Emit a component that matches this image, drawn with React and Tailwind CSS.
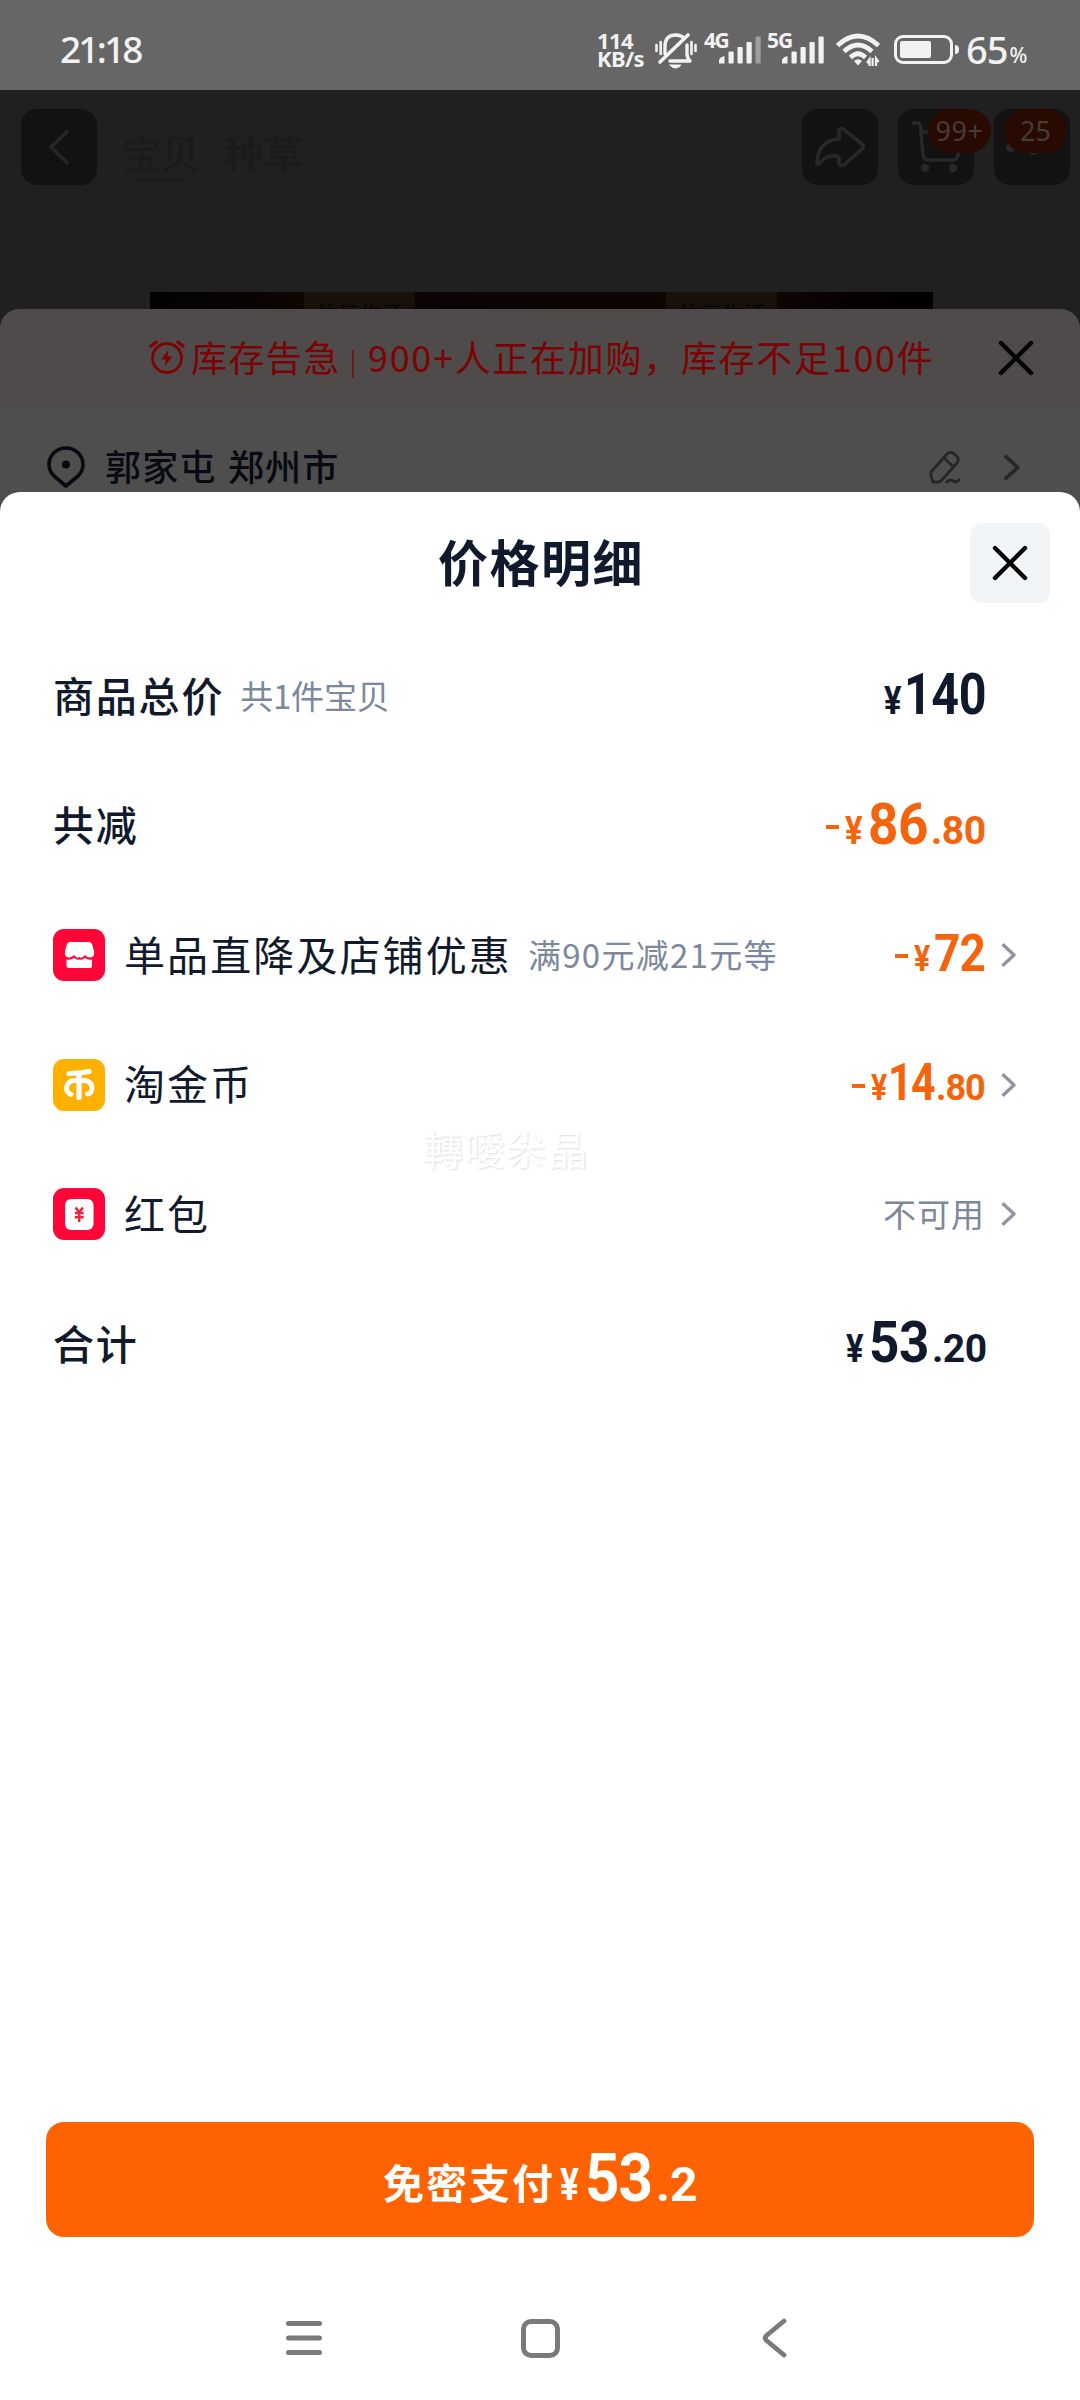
const CJK = "font-['Noto_Sans_CJK_SC',sans-serif]";

function Chevron({ className }) {
  return (
    <svg viewBox="0 0 18 28" className={className} fill="none" stroke="currentColor" strokeWidth="3.6" strokeLinecap="butt" strokeLinejoin="round">
      <path d="M2.5 2.5 L15 14 L2.5 25.5" />
    </svg>
  );
}

function CloseIcon() {
  return (
    <svg viewBox="0 0 36 36" className="h-9 w-9" fill="none" stroke="#000" strokeWidth="4.4" strokeLinecap="round">
      <path d="M3 3 L33 33 M33 3 L3 33" />
    </svg>
  );
}

function Bars({ weak }) {
  return (
    <svg viewBox="0 0 44 30" className="h-[30px] w-[44px]" fill="#f2f2f2">
      <path d="M1 28.5 V25 Q2 22 6.500 21 V28.500 Z" />
      <rect x="10.500" y="16.500" width="5.200" height="12" rx="1" />
      <rect x="19.500" y="12" width="5.200" height="16.500" rx="1" />
      <rect x="28.500" y="7" width="5.200" height="21.500" rx="1" />
      <rect x="37.500" y="1.500" width="5.200" height="27" rx="1" opacity={weak ? 0.4 : 1} />
    </svg>
  );
}

function StatusBar() {
  return (
    <div className="flex h-[90px] items-start bg-[#666] text-[#f2f2f2]">
      <div className="mt-[25px] ml-[60px] w-[537px] font-['Noto_Sans',sans-serif] text-[37px] leading-[48px] font-medium tracking-[-2.8px]">21:18</div>
      <div className="mt-[31px] w-[50px] font-['Noto_Sans',sans-serif] text-[22px] leading-[18px] font-bold tracking-[-0.6px]">
        <div>114</div>
        <div>KB/s</div>
      </div>
      <svg viewBox="0 0 44 38" className="mt-[32px] ml-[7px] h-[38px] w-[44px]" fill="none" stroke="#f2f2f2" strokeWidth="3.400" strokeLinecap="round">
        <path d="M11 22 V14 Q11 3 22 3 Q27 3 30 6" />
        <path d="M33 13 V22 Q33 26 36 29 H16" strokeLinejoin="round" />
        <path d="M6 30 L34 3" strokeWidth="3.600" />
        <path d="M2.500 13 V19 M6.700 10 V22 M37.500 10 V22 M41.500 13 V19" strokeWidth="2.600" />
        <path d="M16 33 H27 Q25 36 21.500 36 Q18 36 16 33 Z" fill="#f2f2f2" strokeWidth="1" />
      </svg>
      <div className="mt-[30px] ml-[6px] w-[14px] font-['Noto_Sans',sans-serif] text-[21px] leading-[20px] font-bold tracking-[-1.5px] whitespace-nowrap">4G</div>
      <div className="mt-[35px]"><Bars weak /></div>
      <div className="mt-[30px] ml-[5px] w-[14px] font-['Noto_Sans',sans-serif] text-[21px] leading-[20px] font-bold tracking-[-1px] whitespace-nowrap">5G</div>
      <div className="mt-[35px]"><Bars /></div>
      <svg viewBox="0 0 44 34" className="mt-[33px] ml-[11px] h-[34px] w-[44px]" fill="none" stroke="#f2f2f2" strokeWidth="4.600" strokeLinecap="butt">
        <path d="M1.500 12.500 Q22 -6.500 42.500 12.500" />
        <path d="M8 18.500 Q22 5.500 36 18.500" />
        <path d="M14.500 24.500 Q22 17 29.500 24.500" />
        <path d="M18 28 Q22 24.500 26 28 L22 32.500 Z" fill="#f2f2f2" stroke="none" />
        <path d="M33.500 33 V26.500 L31 30 M36.600 25 V33 M40 33 V25.500 L42.500 29" strokeWidth="2.200" />
      </svg>
      <div className="mt-[35px] ml-[14px] flex h-[29px] w-[59px] rounded-[9px] border-[3px] border-[#f2f2f2] p-[3px]">
        <div className="h-[17px] w-[31px] rounded-[2px] bg-[#f2f2f2]" />
      </div>
      <div className="mt-[45px] ml-[2px] h-[9px] w-[4px] rounded-r bg-[#f2f2f2]" />
      <div className="mt-[25px] ml-[7px] font-['Noto_Sans',sans-serif] text-[38px] leading-[48px] font-medium tracking-[-1px]">65</div>
      <div className="mt-[38px] ml-[2px] font-['Noto_Sans',sans-serif] text-[21px] leading-[35px] font-medium">%</div>
    </div>
  );
}

function DimButton({ children, className }) {
  return <div className={`relative flex h-[76px] w-[76px] items-center justify-center rounded-[16px] bg-[#121212] ${className}`}>{children}</div>;
}

function DimHeader() {
  return (
    <div className="flex h-[202px] items-start bg-[#202020] pt-[19px]">
      <DimButton className="ml-[21px]">
        <svg viewBox="0 0 22 36" className="h-9 w-[22px]" fill="none" stroke="#262626" strokeWidth="3.600" strokeLinecap="round" strokeLinejoin="round">
          <path d="M19 2.500 L3 18 L19 33.500" />
        </svg>
      </DimButton>
      <div className={`${CJK} mt-[14px] ml-[25px] w-[680px] text-[39px] leading-[56px] font-medium text-[#1b1b1b]`}>
        宝贝<span className="ml-[24px] tracking-[1px]">种草</span>
        <div className="ml-[14px] h-[3px] w-[48px] rounded bg-[#1c1c1c]" />
      </div>
      <DimButton>
        <svg viewBox="0 0 50 42" className="h-[42px] w-[50px]" fill="none" stroke="#282828" strokeWidth="3.600" strokeLinejoin="round">
          <path d="M24 6 Q24 1 28 3 L47 18 Q50 21 47 23 L30 38 Q25 42 24 37 V31 Q12 27 5 37 Q2 41 2 36 Q3 15 24 13 Z" />
        </svg>
      </DimButton>
      <DimButton className="ml-[20px]">
        <svg viewBox="0 0 50 54" className="h-[54px] w-[50px]" fill="none" stroke="#282828" strokeWidth="3.400" strokeLinecap="round" strokeLinejoin="round">
          <path d="M2 3 H7 Q9 3 9.500 7 L12 35 Q13 40 17 40 H42 Q46 40 47 35 L50 20 M10 12 H28" />
          <circle cx="14" cy="48" r="2.500" fill="#282828" />
          <circle cx="42" cy="48" r="2.500" fill="#282828" />
        </svg>
        <div className="absolute top-0 left-[30px] z-10 flex h-[44px] w-[63px] items-center justify-center rounded-full bg-[#290a00] font-['Noto_Sans',sans-serif] text-[27px] tracking-[0.5px] text-[#443c38]">99+</div>
      </DimButton>
      <DimButton className="ml-[20px]">
        <div className="absolute top-[34px] left-[12px] h-[9px] w-[9px] rounded-full bg-[#282828]" />
        <div className="absolute top-[36px] left-[34px] h-[10px] w-[10px] rounded-full bg-[#282828]" />
        <div className="absolute top-0 left-[10px] flex h-[44px] w-[63px] items-center justify-center rounded-full bg-[#290a00] font-['Noto_Sans',sans-serif] text-[27px] text-[#443c38]">25</div>
      </DimButton>
    </div>
  );
}

function ProductStrip() {
  return (
    <div className={`${CJK} flex h-[33px] items-start bg-[#202020]`}>
      <div className="ml-[150px] h-[33px] w-[154px] bg-gradient-to-r from-[#030202] to-[#0d0603]" />
      <div className="h-[33px] w-[111px] bg-[#17110a] pt-[8px] pl-[12px] text-[22px] leading-[25px] text-[#060402]">依云生活</div>
      <div className="h-[33px] w-[251px] bg-gradient-to-r from-[#0a0504] to-[#0c0504]" />
      <div className="h-[33px] w-[111px] bg-[#17110a] pt-[8px] pl-[12px] text-[22px] leading-[25px] text-[#060402]">依云生活</div>
      <div className="h-[33px] w-[156px] bg-gradient-to-r from-[#0d0605] to-[#020000]" />
    </div>
  );
}

function StockNotice() {
  return (
    <div className="relative mt-[-16px] h-[199px] overflow-hidden rounded-t-[20px] bg-[#4e4e4e]">
      <div className={`${CJK} flex h-[97px] items-center bg-[#4e4b4a] text-[36px] leading-[52px] text-[#7c0304]`}>
        <svg viewBox="0 0 36 36" className="ml-[149px] h-9 w-9" fill="none" stroke="#7c0304" strokeWidth="2.800" strokeLinecap="round">
          <circle cx="18" cy="18" r="14.500" />
          <path d="M2 6 L7 2 M29 2 L34 6" strokeWidth="3.400" />
          <path d="M19.500 9.500 L12 19.500 H17 L15.500 26.500 L23.500 16.500 H18.500 Z" fill="#7c0304" stroke="none" />
        </svg>
        <div className="mt-[-3px] ml-[6px] w-[148px] tracking-[1.4px] whitespace-nowrap">库存告急</div>
        <div className="mt-[12px] ml-[13px] h-[28px] w-[2px] bg-[#651c1c]" />
        <div className="mt-[-3px] ml-[14px] w-[570px] tracking-[1.7px] whitespace-nowrap">900+人正在加购，库存不足100件</div>
        <div className="ml-[60px]"><CloseIcon /></div>
      </div>
      <div className={`${CJK} flex h-[118px] items-center text-[36px] leading-[52px] font-medium text-[#080a12]`}>
        <svg viewBox="0 0 38 42" className="mt-[4px] ml-[47px] h-[42px] w-[38px]" fill="none" stroke="#080a12" strokeWidth="3.600" strokeLinejoin="round">
          <path d="M19 40 L7 30 Q2 25 2 18.500 A17 16.500 0 0 1 36 18.500 Q36 25 31 30 Z" />
          <circle cx="19" cy="18.500" r="4" fill="#080a12" stroke="none" />
        </svg>
        <div className="ml-[20px] w-[824px] tracking-[1.2px] [word-spacing:2px]">郭家屯 郑州市</div>
        <svg viewBox="0 0 32 34" className="mt-[4px] h-[34px] w-[32px]" fill="none" stroke="#24262a" strokeWidth="2.800" strokeLinecap="round" strokeLinejoin="round">
          <path d="M2 22 L18 4 Q21 1 24.500 3.500 L27 5.500 Q31 9 28 13 L12 31 Q11 32 9.500 32 H4 L2 26 Z M15 8 L24 16.500" />
          <path d="M18 32 Q21 28.500 24 31 Q27 33 30 30" />
        </svg>
        <Chevron className="mt-[4px] ml-[41px] h-[29px] w-[19px] text-[#24262a]" />
      </div>
    </div>
  );
}

/* Amounts use condensed figures: each part sits in a cell sized for its digits. */
function Price({ minus, whole, cents, big, yenCell, wholeCell, wholeFit, centsCell, color }) {
  return (
    <div className={`mt-[-2px] flex items-baseline font-['Roboto',sans-serif] font-bold whitespace-nowrap ${color}`}>
      {minus && <span className={big ? "mt-[6px] mr-[6px] h-[4px] w-[13px] self-center bg-current" : "mt-[4px] mr-[6px] h-[4px] w-[13px] self-center bg-current"} />}
      <span className={yenCell}>
        <span className={big ? "inline-block origin-left scale-x-[0.84] text-[39px]" : "inline-block origin-left scale-x-[0.84] text-[36px]"}>¥</span>
      </span>
      <span className={`${wholeCell} ${big ? "text-[57px]" : "text-[51px]"}`}>
        <span className={`inline-block origin-left ${wholeFit}`}>{whole}</span>
      </span>
      {cents && <span className={`${centsCell} ${big ? "text-[39px] tracking-[-0.5px]" : "text-[36px] tracking-[-1px]"}`}>.{cents}</span>}
    </div>
  );
}

function ShopIcon() {
  return (
    <svg viewBox="0 0 52 52" className="h-[52px] w-[52px]">
      <rect width="52" height="52" rx="11" fill="#ff0538" />
      <path d="M17 13 H36 Q38 13 39 15 L41 22 Q42 28 37 28.500 Q34 28.500 32 26 Q29 30 26.500 28 Q24 30 21 26 Q19 28.500 16 28.500 Q11 28 12 22 L14 15 Q15 13 17 13 Z" fill="#fff" />
      <path d="M13.500 30.500 Q18 31.500 21 29 Q24 31.500 26.500 30.500 Q29 31.500 32 29 Q35 31.500 39 30.500 V37 Q39 39 37 39 H16 Q13.500 39 13.500 37 Z" fill="#fff" />
    </svg>
  );
}

function CoinIcon() {
  return (
    <svg viewBox="0 0 52 52" className="h-[52px] w-[52px]">
      <rect width="52" height="52" rx="11" fill="#ffb000" />
      <g fill="none" stroke="#fff" strokeWidth="5.200" strokeLinecap="round">
        <path d="M16 14.500 Q27 14.500 36 12.500 M26 14 V38.500" />
        <path d="M18 35.500 Q13 33 13.500 28.500 Q15 21.500 22 21.500 H30 Q38 21.500 39 28 Q39 35 34.500 35" strokeWidth="4.800" />
      </g>
    </svg>
  );
}

function PacketIcon() {
  return (
    <svg viewBox="0 0 52 52" className="h-[52px] w-[52px]">
      <rect width="52" height="52" rx="11" fill="#ff0538" />
      <rect x="12" y="11" width="28.500" height="31" rx="6" fill="#fff" />
      <path d="M22.500 19.500 L26.200 24 L30 19.500 M26.200 24 V34 M21.800 25 H30.600 M21.800 29.300 H30.600" fill="none" stroke="#e8243f" strokeWidth="2.500" />
    </svg>
  );
}

function Row({ icon, label, note, noteClass, children, chevron, strong }) {
  return (
    <div className="flex h-[129.6px] items-center">
      {icon && <div className="mr-[19px]">{icon}</div>}
      <div className={strong ? "mt-[-3px] text-[41px] font-medium tracking-[1.8px]" : "mt-[-3px] text-[41px] tracking-[2.1px]"}>{label}</div>
      {note && <div className={`text-[33px] text-[#7c889c] ${noteClass}`}>{note}</div>}
      <div className="ml-auto">{children}</div>
      <div className="flex w-[32px] justify-end">{chevron && <Chevron className="h-[26px] w-[17px] text-[#90959f]" />}</div>
    </div>
  );
}

function NavBar() {
  return (
    <div className="flex h-[124px] items-center">
      <svg viewBox="0 0 38 36" className="ml-[285px] h-9 w-[38px]" fill="none" stroke="#7a7a7a" strokeWidth="5" strokeLinecap="round">
        <path d="M3.500 3.500 H34.500 M3.500 18 H34.500 M3.500 32.500 H34.500" />
      </svg>
      <div className="ml-[198px] h-[39px] w-[39px] rounded-[10px] border-[5px] border-[#7a7a7a]" />
      <svg viewBox="0 0 26 40" className="ml-[202px] h-[40px] w-[26px]" fill="none" stroke="#7a7a7a" strokeWidth="4.800" strokeLinecap="round" strokeLinejoin="round">
        <path d="M22 3 L4.500 17.500 Q2 20 4.500 22.500 L22 37" />
      </svg>
    </div>
  );
}

export default function App() {
  const dark = "text-[#111a2c]";
  const orange = "text-[#f5640c]";
  return (
    <div className="h-[2400px] w-[1080px] overflow-hidden bg-[#202020]">
      <StatusBar />
      <DimHeader />
      <ProductStrip />
      <StockNotice />
      <main className={`${CJK} relative mt-[-16px] flex h-[1908px] flex-col rounded-t-[20px] bg-white ${dark}`}>
        <header className="flex h-[139px] items-center">
          <h1 className="mt-[-3px] ml-[438px] w-[532px] text-[50px] leading-[70px] font-bold tracking-[1.5px]">价格明细</h1>
          <button className="mt-[2px] flex h-[80px] w-[80px] items-center justify-center rounded-[12px] bg-[#f1f5f8]"><CloseIcon /></button>
        </header>
        <section className="mr-[63px] ml-[53px]">
          <Row label="商品总价" note="共1件宝贝" noteClass="ml-[16px] tracking-[-0.2px]" strong>
            <Price whole="140" big color={dark} yenCell="w-[20px]" wholeCell="w-[81px]" wholeFit="scale-x-[0.85] tracking-[-0.5px]" />
          </Row>
          <Row label="共减" strong>
            <Price minus whole="86" cents="80" big color={orange} yenCell="w-[23px]" wholeCell="w-[63px]" wholeFit="scale-x-[0.93] tracking-[-0.5px]" centsCell="w-[54px]" />
          </Row>
          <Row icon={<ShopIcon />} label="单品直降及店铺优惠" note="满90元减21元等" noteClass="ml-[16px] tracking-[1.3px]" chevron>
            <Price minus whole="72" color={orange} yenCell="w-[20px]" wholeCell="w-[51px]" wholeFit="scale-x-[0.9] tracking-[-1px]" />
          </Row>
          <Row icon={<CoinIcon />} label="淘金币" chevron>
            <Price minus whole="14" cents="80" color={orange} yenCell="w-[17px]" wholeCell="w-[48px]" wholeFit="scale-x-[0.84] tracking-[-2px]" centsCell="w-[49px]" />
          </Row>
          <Row icon={<PacketIcon />} label="红包" chevron>
            <span className="text-[33px] tracking-[1px] text-[#7c889c]">不可用</span>
          </Row>
          <Row label="合计" strong>
            <Price whole="53" cents="20" big color={dark} yenCell="w-[23px]" wholeCell="w-[63px]" wholeFit="scale-x-[0.93] tracking-[-0.5px]" centsCell="w-[53px]" />
          </Row>
        </section>
        <div className="absolute top-[626px] left-[423px] font-['Noto_Sans_CJK_TC',sans-serif] text-[40px] leading-[60px] tracking-[1.5px] text-white [text-shadow:1px_1px_2px_#dcdce2]">轉噯尜晶</div>
        <div className="mt-auto">
          <button className="mx-[46px] flex h-[115px] w-[988px] items-baseline rounded-[18px] bg-[#ff6200] pt-[7px] text-white">
            <span className="relative top-[-2px] ml-[332px] w-[182px] text-[41px] font-bold tracking-[2px]">免密支付</span>
            <span className="relative top-[-1px] w-[25px] text-left font-['Roboto',sans-serif] text-[44px] font-bold">
              <span className="inline-block origin-left scale-x-[0.8]">¥</span>
            </span>
            <span className="w-[71px] text-left font-['Roboto',sans-serif] text-[66px] font-bold tracking-[-1px]">
              <span className="inline-block origin-left scale-x-[0.91]">53</span>
            </span>
            <span className="font-['Roboto',sans-serif] text-[48px] font-bold">.2</span>
          </button>
          <div className="h-[39px]" />
          <NavBar />
        </div>
      </main>
    </div>
  );
}
